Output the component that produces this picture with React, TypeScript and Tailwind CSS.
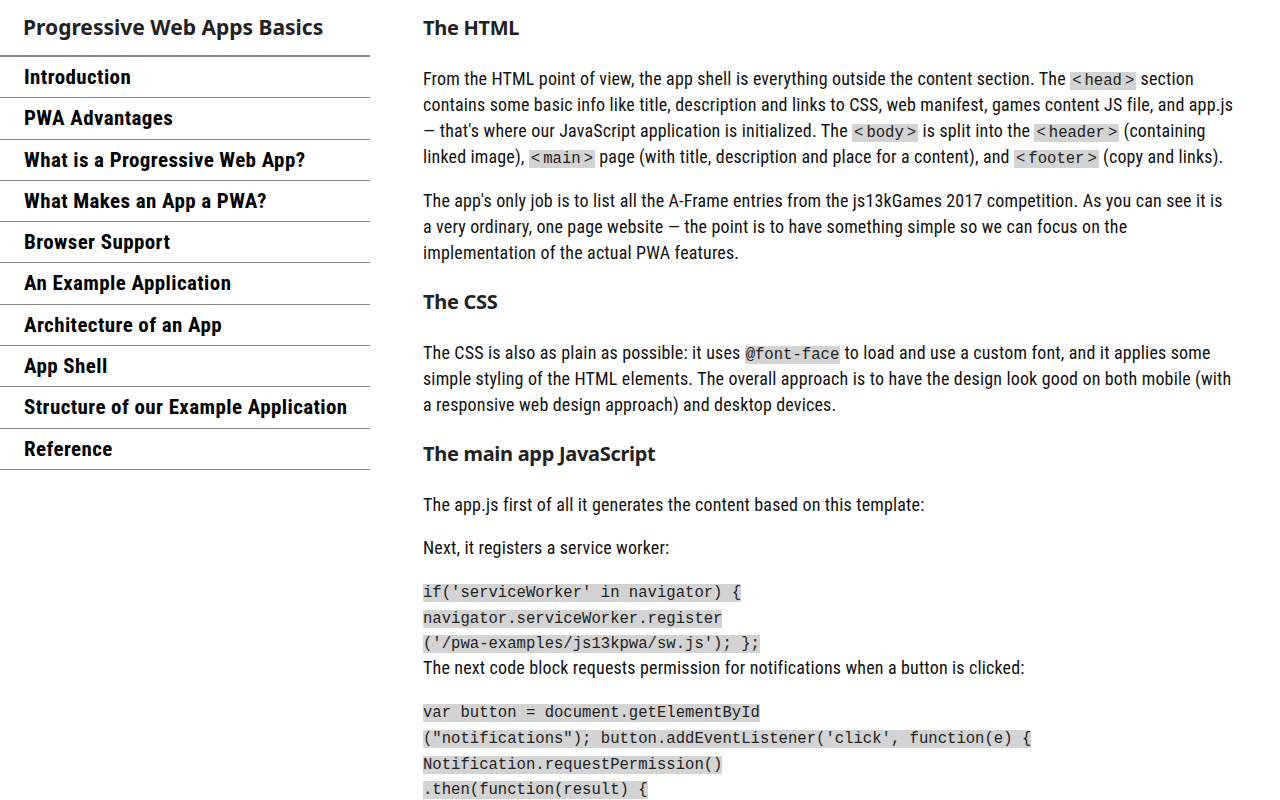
const navItems = [
  "Introduction",
  "PWA Advantages",
  "What is a Progressive Web App?",
  "What Makes an App a PWA?",
  "Browser Support",
  "An Example Application",
  "Architecture of an App",
  "App Shell",
  "Structure of our Example Application",
  "Reference",
];

const body = "font-['Roboto',sans-serif] font-stretch-condensed tracking-[0.16px]";
const heading = "font-['Noto_Sans',sans-serif]";
const mono = "font-['Liberation_Mono',monospace] tracking-normal";

function Tag({ name }: { name: string }) {
  return (
    <code
      className={`${mono} bg-[#d3d3d3] px-[2px] text-[15.6px] leading-none text-[#222]`}
    >
      &lt;<span className="mx-[3px]">{name}</span>&gt;
    </code>
  );
}

function CodeLines({ lines }: { lines: string[] }) {
  return (
    <>
      {lines.map((line, i) => (
        <span key={i}>
          <code
            className={`${mono} bg-[#d3d3d3] text-[15.6px] leading-none text-[#222]`}
          >
            {line}
          </code>
          <br />
        </span>
      ))}
    </>
  );
}

function H2({ children }: { children: React.ReactNode }) {
  return (
    <h2
      className={`${heading} mt-[18px] mb-[20px] text-[20px] leading-[36px] font-bold tracking-[-0.3px] text-[#222] first:mt-0`}
    >
      {children}
    </h2>
  );
}

export default function App() {
  return (
    <div className="flex min-h-[800px] bg-white text-[#111]">
      <aside className="w-[370px] shrink-0">
        <h1
          className={`${heading} border-b-2 border-[#888] pl-[23px] pt-[10px] pb-[10px] text-[21px] leading-[35px] font-bold text-[#222]`}
        >
          Progressive Web Apps Basics
        </h1>
        <ul>
          {navItems.map((item) => (
            <li
              key={item}
              className="border-b border-[#888] pl-[24px] font-['Roboto',sans-serif] text-[21px] leading-[40.3px] font-bold tracking-[0.4px] text-black font-stretch-condensed"
            >
              {item}
            </li>
          ))}
        </ul>
      </aside>

      <main
        className={`${body} ml-[53px] w-[812px] pt-[10px] text-[18px] leading-[26px]`}
      >
        <H2>The HTML</H2>
        <p className="mb-[18px]">
          From the HTML point of view, the app shell is everything outside the
          content section. The <Tag name="head" /> section contains some basic
          info like title, description and links to CSS, web manifest, games
          content JS file, and app.js — that's where our JavaScript application
          is initialized. The <Tag name="body" /> is split into the{" "}
          <Tag name="header" /> (containing linked image), <Tag name="main" />{" "}
          page (with title, description and place for a content), and{" "}
          <Tag name="footer" /> (copy and links).
        </p>
        <p className="mb-[18px]">
          The app's only job is to list all the A-Frame entries from the
          js13kGames 2017 competition. As you can see it is a very ordinary, one
          page website — the point is to have something simple so we can focus
          on the implementation of the actual PWA features.
        </p>

        <H2>The CSS</H2>
        <p className="mb-[18px]">
          The CSS is also as plain as possible: it uses{" "}
          <code
            className={`${mono} bg-[#d3d3d3] px-[1px] text-[15.6px] leading-none text-[#222]`}
          >
            @font-face
          </code>{" "}
          to load and use a custom font, and it applies some simple styling of
          the HTML elements. The overall approach is to have the design look
          good on both mobile (with a responsive web design approach) and
          desktop devices.
        </p>

        <H2>The main app JavaScript</H2>
        <p className="mb-[17px]">
          The app.js first of all it generates the content based on this
          template:
        </p>
        <p className="mb-[17px]">Next, it registers a service worker:</p>
        <p className="leading-[25.7px]">
          <CodeLines
            lines={[
              "if('serviceWorker' in navigator) {",
              "navigator.serviceWorker.register",
              "('/pwa-examples/js13kpwa/sw.js'); };",
            ]}
          />
        </p>
        <p className="mb-[17px]">
          The next code block requests permission for notifications when a
          button is clicked:
        </p>
        <p className="leading-[25.7px]">
          <CodeLines
            lines={[
              "var button = document.getElementById",
              "(\"notifications\"); button.addEventListener('click', function(e) {",
              "Notification.requestPermission()",
              ".then(function(result) {",
            ]}
          />
        </p>
      </main>
    </div>
  );
}
